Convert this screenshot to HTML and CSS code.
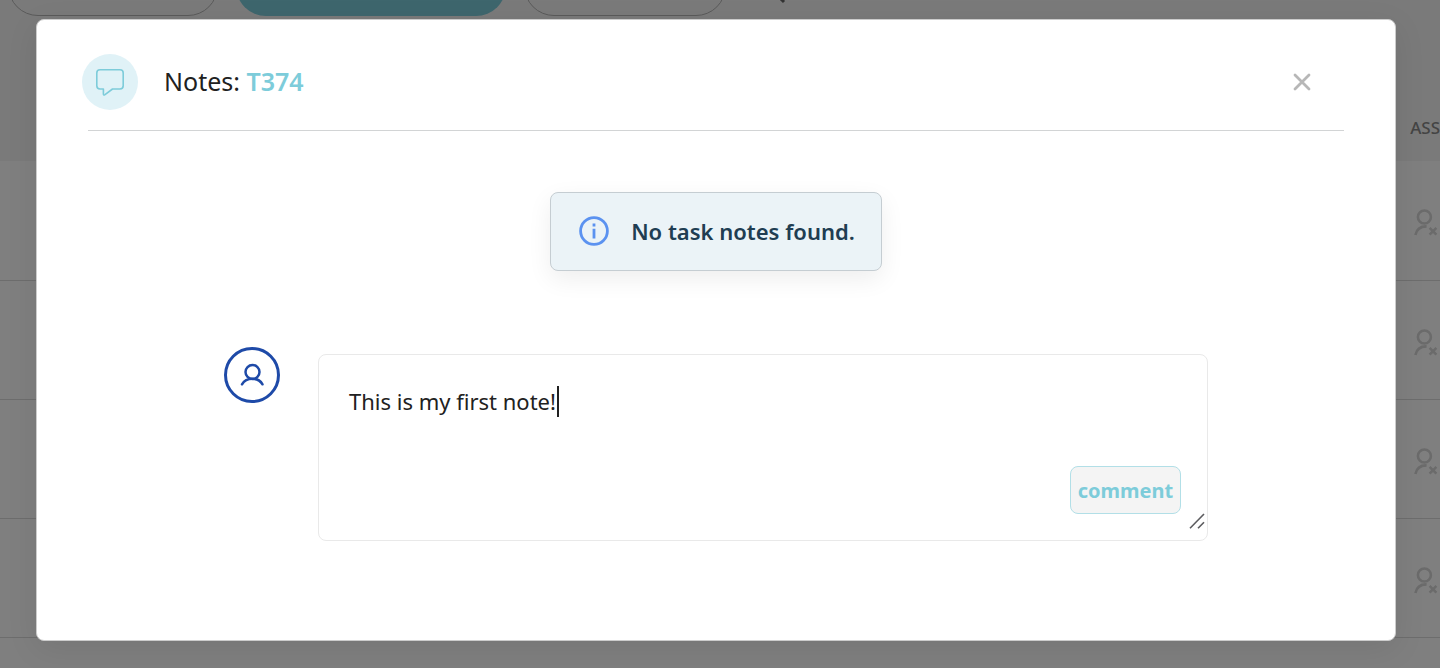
FILE: index.html
```html
<!DOCTYPE html>
<html lang="en">
<head>
<meta charset="utf-8">
<title>Task notes</title>
<link rel="stylesheet" href="styles.css">
</head>
<body>
<svg class="sprite" aria-hidden="true">
  <symbol id="user-x" viewBox="0 0 24 28" fill="none" stroke="currentColor" stroke-width="2.6">
    <circle cx="10.400" cy="8" r="6.500"/>
    <path d="M1.400 26C2.500 20.500 6.500 17.300 12.600 17.400M15.600 18.900l6.800 6.800M22.400 18.900l-6.800 6.800"/>
  </symbol>
</svg>
<div class="page">
  <div class="toolbar">
    <button class="pill" type="button" aria-label="Filter"></button>
    <button class="pill pill-active" type="button" aria-label="Active filter"></button>
    <button class="pill pill-short" type="button" aria-label="Filter"></button>
    <svg class="search" viewBox="0 0 20 20" aria-hidden="true"><circle cx="8" cy="7" r="6" /><path d="M12 12l6 6"/></svg>
  </div>
  <table class="tasks">
    <thead><tr><th>ASS</th></tr></thead>
    <tbody>
      <tr><td><svg class="assignee"><use href="#user-x"/></svg></td></tr>
      <tr><td><svg class="assignee"><use href="#user-x"/></svg></td></tr>
      <tr><td><svg class="assignee"><use href="#user-x"/></svg></td></tr>
      <tr><td><svg class="assignee"><use href="#user-x"/></svg></td></tr>
    </tbody>
  </table>
</div>

<div class="overlay">
  <section class="modal" role="dialog" aria-modal="true" aria-labelledby="notes-title">
    <header class="modal-header">
      <span class="badge">
        <svg width="28" height="28" viewBox="0 0 28 28" fill="none" stroke="#7dccda" stroke-width="1.600" stroke-linejoin="round" aria-hidden="true">
          <path d="M4 1.800H24Q27.200 1.800 27.200 5V17.800Q27.200 21 24 21H16.500L9 26.600Q7.400 27.600 7.400 26V21H4Q.8 21 .8 17.800V5Q.8 1.800 4 1.800Z"/>
        </svg>
      </span>
      <h1 class="title" id="notes-title">Notes: <span class="task-id">T374</span></h1>
      <button class="close" type="button" aria-label="Close">
        <svg width="18" height="18" viewBox="0 0 18 18" fill="none" stroke="#b7b7b7" stroke-width="2.800" stroke-linecap="round"><path d="M2 2l14 14M16 2L2 16"/></svg>
      </button>
    </header>

    <p class="notice">
      <svg width="30" height="30" viewBox="0 0 30 30" fill="none" stroke="#5b92f0" aria-hidden="true">
        <circle cx="15" cy="15" r="13.400" stroke-width="2.800"/>
        <path d="M15 7.600v3M15 12.800v9.600" stroke-width="2.800"/>
      </svg>
      <span>No task notes found.</span>
    </p>

    <form class="composer">
      <span class="avatar">
        <svg width="24" height="24" viewBox="0 0 24 24" fill="none" stroke="#1e4aa8" stroke-width="2.500" stroke-linecap="round" aria-hidden="true">
          <circle cx="12.500" cy="9" r="7"/>
          <path d="M2 21.300C4 17.800 8 15.800 12.500 15.800S20.500 17.800 22.500 21.300"/>
        </svg>
      </span>
      <div class="editor">
        <textarea class="note" aria-label="Note">This is my first note!</textarea>
        <span class="caret"></span>
        <button class="comment" type="button">comment</button>
        <svg class="grip" width="16" height="16" viewBox="0 0 16 16" fill="none" stroke="#5c5c5f" stroke-width="1.600" aria-hidden="true"><path d="M1 15.300L15 1M9 15.300L15 9.200"/></svg>
      </div>
    </form>
  </section>
</div>
</body>
</html>
```

FILE: styles.css
```css
* {
  box-sizing: border-box;
}

body {
  margin: 0;
  min-height: 100vh;
  overflow: hidden;
  font-family: "Noto Sans", "Open Sans", sans-serif;
  color: #212121;
  background: #fff;
}

button {
  font: inherit;
  cursor: pointer;
}

.sprite {
  position: absolute;
  width: 0;
  height: 0;
}

.page {
  position: absolute;
  inset: 0;
  overflow: hidden;
}

.toolbar {
  display: flex;
  gap: 18px;
  height: 94px;
  margin-top: -44px;
  padding-left: 8px;
  background: #f5f5f5;
}

.pill {
  width: 210px;
  height: 60px;
  border: 1px solid #b4b4b4;
  border-radius: 30px;
  background: transparent;
}

.pill-active {
  width: 270px;
  border: 0;
  background: #7dccda;
}

.pill-short {
  width: 202px;
}

.search {
  width: 20px;
  height: 20px;
  margin: 28px 0 0 22px;
  fill: none;
  stroke: #666;
  stroke-width: 3;
}

.tasks {
  width: 100%;
  border-collapse: collapse;
}

.tasks th {
  height: 111px;
  padding: 44px 0 0;
  background: #f5f5f5;
  color: #888;
  font-size: 17px;
  font-weight: 500;
  line-height: 24px;
  text-align: right;
  vertical-align: middle;
}

.tasks td {
  height: 119px;
  padding: 6px 2px 0 0;
  border-bottom: 1px solid #dadada;
  color: #d6d6d6;
  text-align: right;
}

.assignee {
  width: 24px;
  height: 28px;
  vertical-align: middle;
}

.overlay {
  position: absolute;
  inset: 0;
  display: flex;
  padding: 19px 44px 27px 36px;
  background: rgba(0, 0, 0, 0.5);
}

.modal {
  flex: 1;
  padding: 0 51px;
  border: 1px solid #ccc;
  border-radius: 8px;
  background: #fff;
  box-shadow: 0 8px 32px rgba(0, 0, 0, 0.08);
}

.modal-header {
  display: flex;
  align-items: center;
  height: 111px;
  padding: 14px 33px 0 0;
  border-bottom: 1px solid #d2d4d5;
}

.badge {
  display: grid;
  place-items: center;
  width: 56px;
  height: 56px;
  margin: 0 26px 0 -6px;
  border-radius: 50%;
  background: #e0f2f7;
}

.title {
  flex: 1;
  margin: 0;
  padding-bottom: 2px;
  font-size: 25px;
  font-weight: 400;
  line-height: 34px;
}

.task-id {
  color: #7dccda;
  font-weight: 600;
}

.close {
  display: grid;
  padding: 0;
  border: 0;
  background: none;
}

.notice {
  display: flex;
  align-items: center;
  gap: 22px;
  width: fit-content;
  height: 79px;
  margin: 61px auto 0;
  padding: 0 26px 2px 28px;
  border: 1px solid #c5cdd2;
  border-radius: 8px;
  background: #ebf3f7;
  box-shadow: 0 8px 24px rgba(0, 0, 0, 0.07);
  color: #203d52;
  font-size: 22px;
  font-weight: 600;
  line-height: 30px;
}

.composer {
  display: flex;
  gap: 38px;
  max-width: 984px;
  margin: 76px auto 0;
}

.avatar {
  display: grid;
  place-items: center;
  flex: none;
  width: 56px;
  height: 56px;
  border: 3px solid #1e4aa8;
  border-radius: 50%;
}

.editor {
  position: relative;
  flex: 1;
  margin-top: 7px;
}

.note {
  display: block;
  width: 100%;
  height: 187px;
  padding: 31px 30px;
  border: 1px solid #e9e9e9;
  border-radius: 8px;
  outline: 0;
  background: #fff;
  color: #212121;
  font: inherit;
  font-size: 22px;
  line-height: 30px;
  resize: none;
}

.caret {
  position: absolute;
  top: 32px;
  left: 239px;
  width: 2px;
  height: 31px;
  background: #212121;
}

.comment {
  position: absolute;
  right: 27px;
  bottom: 27px;
  width: 111px;
  height: 48px;
  padding: 0;
  border: 1px solid #b2dfe7;
  border-radius: 8px;
  background: #f4f4f4;
  color: #7dccda;
  font-size: 20px;
  font-weight: 700;
}

.grip {
  position: absolute;
  right: 3px;
  bottom: 12px;
}
```
